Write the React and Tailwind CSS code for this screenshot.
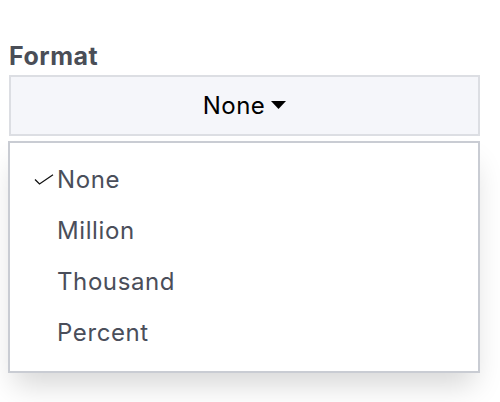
import { useState } from "react";

/* Format picker: label, toggle button and open menu */

const options = ["None", "Million", "Thousand", "Percent"];

export default function App() {
  const [value, setValue] = useState("None");

  return (
    <div
      className="w-[500px] h-[402px] bg-white pt-[41px] px-[8px]"
      style={{ fontFamily: "Inter, 'Noto Sans', sans-serif" }}
    >
      <div className="w-[472px]">
        <label className="block pl-[1px] text-[25px] leading-[31px] font-bold tracking-[0.5px] text-[#4a4e57]">
          Format
        </label>

        <button className="mt-[3px] ml-[1px] w-[471px] h-[61px] flex items-center justify-center gap-[6px] bg-[#f5f6fa] border-2 border-[#dcdee3] text-[24px] tracking-[0.5px] text-black">
          {value}
          <svg width="15" height="8" viewBox="0 0 15 8" className="mt-[-2px]">
            <path d="M0 0h15L7.5 8z" fill="#000" />
          </svg>
        </button>

        <ul className="mt-[5px] w-[472px] h-[232px] border-2 border-[#c9ccd3] bg-white py-[11px] shadow-[0_18px_28px_-6px_rgba(0,0,0,0.16)]">
          {options.map((o) => (
            <li
              key={o}
              onClick={() => setValue(o)}
              className="relative h-[51px] flex items-center pl-[47px] text-[24px] tracking-[0.6px] text-[#4a4e5a] cursor-pointer"
            >
              {o === value && (
                <span className="absolute left-[24px] top-[20px]">
                  <svg width="20" height="11" viewBox="0 0 20 11">
                    <path d="M1 5.5L5.5 10L19 0.8" fill="none" stroke="#111" strokeWidth="1.3" />
                  </svg>
                </span>
              )}
              {o}
            </li>
          ))}
        </ul>
      </div>
    </div>
  );
}
